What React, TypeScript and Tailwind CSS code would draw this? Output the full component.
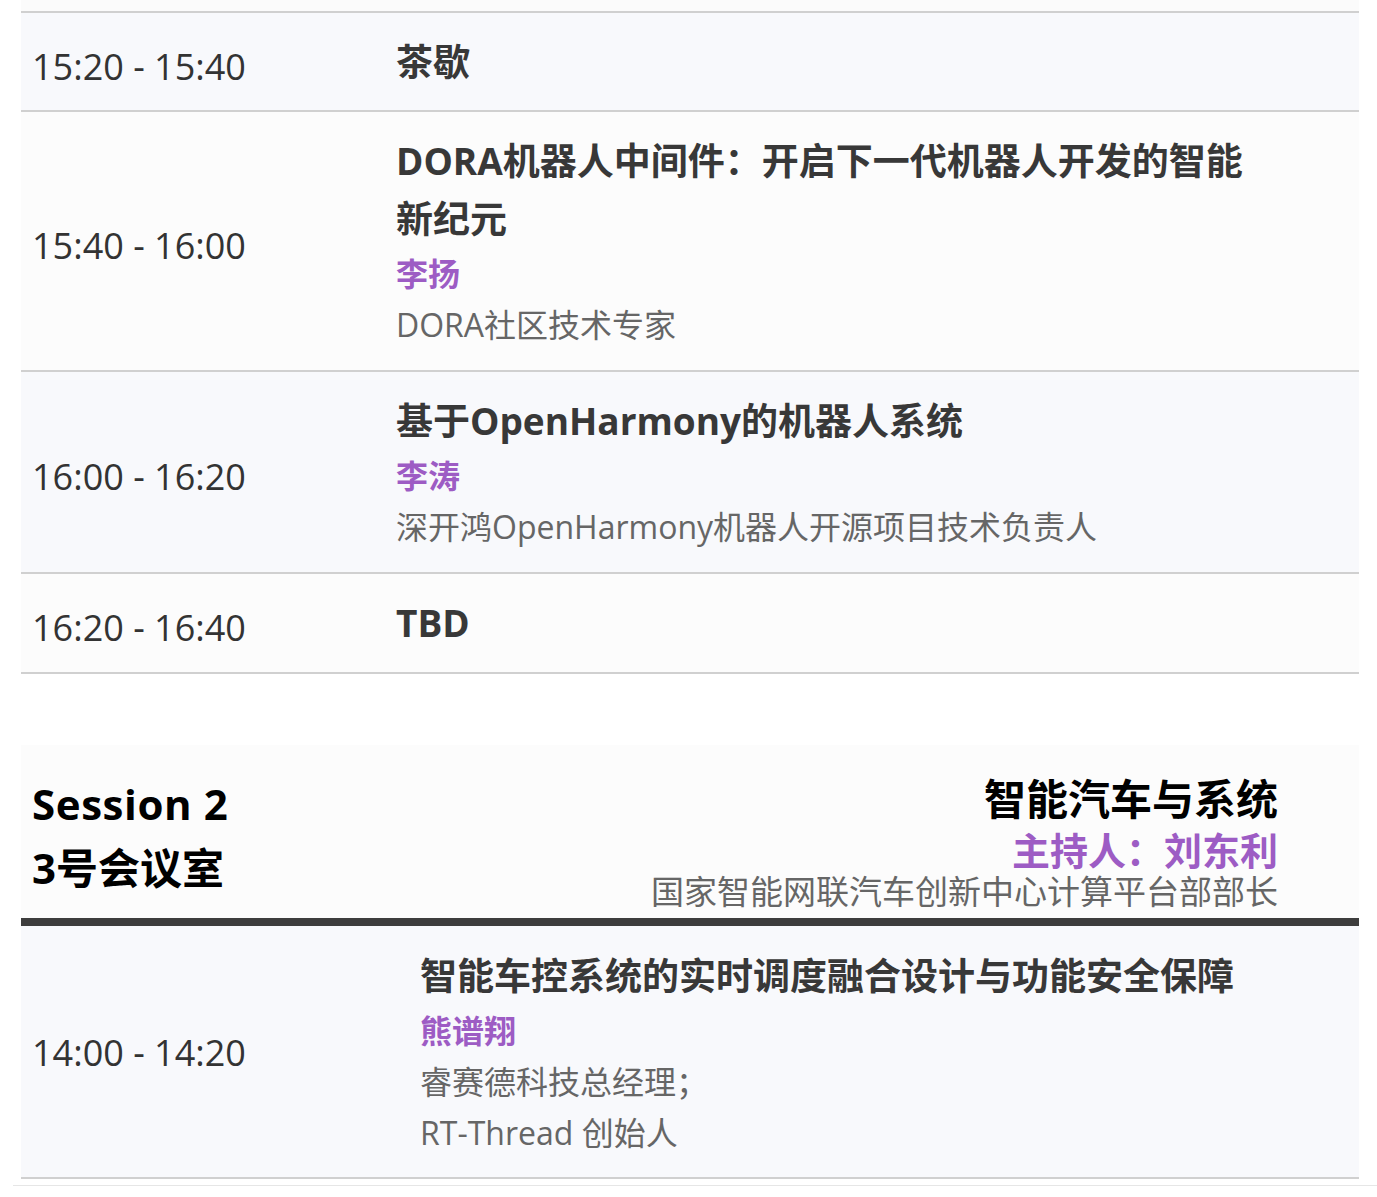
import React from "react";

const FONT = "font-['Open_Sans','Noto_Sans_CJK_SC',sans-serif]";

type Item = {
  time: string;
  title: React.ReactNode;
  name?: string;
  subs?: string[];
};

const table1: Item[] = [
  { time: "15:20 - 15:40", title: "茶歇" },
  {
    time: "15:40 - 16:00",
    title: (
      <>
        DORA机器人中间件：开启下一代机器人开发的智能
        <br />
        新纪元
      </>
    ),
    name: "李扬",
    subs: ["DORA社区技术专家"],
  },
  {
    time: "16:00 - 16:20",
    title: "基于OpenHarmony的机器人系统",
    name: "李涛",
    subs: ["深开鸿OpenHarmony机器人开源项目技术负责人"],
  },
  { time: "16:20 - 16:40", title: "TBD" },
];

function Row({
  item,
  odd,
  timeW,
  second,
  first,
}: {
  item: Item;
  odd: boolean;
  timeW: string;
  second?: boolean;
  first?: boolean;
}) {
  return (
    <div
      className={`flex border-b-2 border-[#d0d0d0] ${odd ? "bg-[#f8f9fc]" : "bg-[#fcfcfc]"} ${
        second ? "pt-[21px] pb-[19px]" : first ? "pt-[20px] pb-[19px]" : "py-[20px]"
      }`}
    >
      <div className={`${timeW} shrink-0 pl-[11px] flex items-center`}>
        <span
          className={`text-[36px] text-[#333333] whitespace-nowrap ${
            second ? "leading-[58px]" : "pt-[10px] leading-[48px]"
          }`}
        >
          {item.time}
        </span>
      </div>
      <div className="flex-1 pr-[80px]">
        <div className="text-[37px] leading-[58px] font-bold text-[#383838]">{item.title}</div>
        {item.name && (
          <div className="text-[32px] leading-[51px] font-bold text-[#9d5cc4]">{item.name}</div>
        )}
        {item.subs?.map((s) => (
          <div key={s} className="text-[32px] leading-[51px] text-[#666666]">
            {s}
          </div>
        ))}
      </div>
    </div>
  );
}

export default function App() {
  return (
    <div className={`w-[1377px] min-h-[1197px] bg-white ${FONT}`}>
      <div className="ml-[21px] w-[1338px]">
        <div className="h-[13px] bg-[#fbfbfb] border-b-2 border-[#d0d0d0]" />
        {table1.map((it, i) => (
          <Row key={it.time} item={it} odd={i % 2 === 0} timeW="w-[375px]" first={i === 0} />
        ))}

        <div className="mt-[71px] h-[173px] bg-[#fcfcfc] flex justify-between pt-[27px] pl-[11px] pr-[81px]">
          <div className="text-[42px] leading-[64px] font-bold text-black">
            <div className="tracking-[0.6px]">Session 2</div>
            <div>3号会议室</div>
          </div>
          <div className="text-right">
            <div className="text-[42px] leading-[54px] font-bold text-black">智能汽车与系统</div>
            <div className="text-[38px] leading-[48px] font-bold text-[#9d5cc4]">主持人：刘东利</div>
            <div className="text-[33px] leading-[36px] text-[#666666]">国家智能网联汽车创新中心计算平台部部长</div>
          </div>
        </div>
        <div className="h-[8px] bg-[#3d3d3d]" />
        <Row
          item={{
            time: "14:00 - 14:20",
            title: "智能车控系统的实时调度融合设计与功能安全保障",
            name: "熊谱翔",
            subs: ["睿赛德科技总经理；", "RT-Thread 创始人"],
          }}
          odd
          timeW="w-[399px]"
          second
        />
      </div>
      <div className="mt-[6px] ml-[13px] h-px bg-[#e6e6e6]" />
    </div>
  );
}
